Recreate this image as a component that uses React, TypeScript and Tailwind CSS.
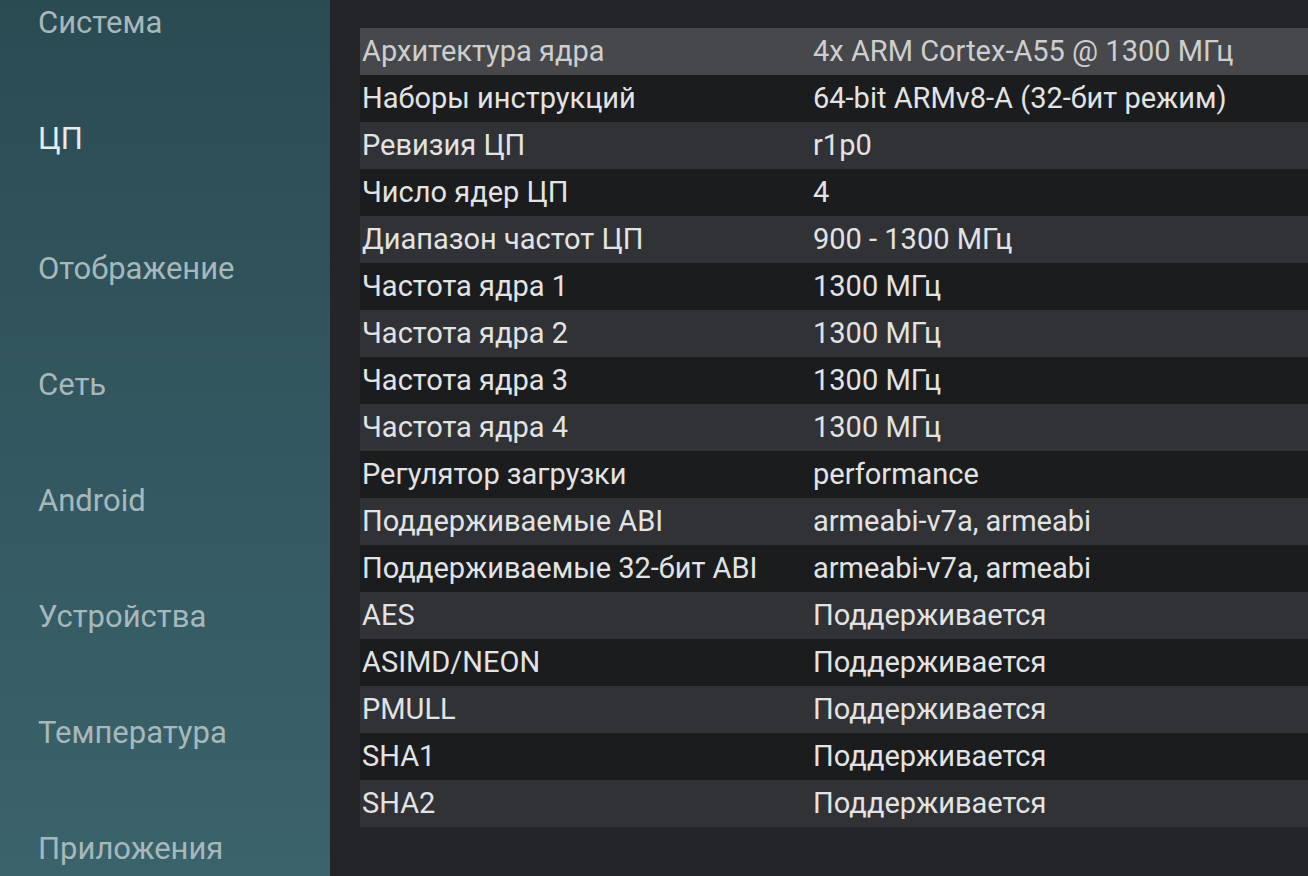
import React from 'react';

const menu = [
  { name: 'Система' },
  { name: 'ЦП', active: true },
  { name: 'Отображение' },
  { name: 'Сеть' },
  { name: 'Android' },
  { name: 'Устройства' },
  { name: 'Температура' },
  { name: 'Приложения' },
];

const rows: [string, string][] = [
  ['Архитектура ядра', '4x ARM Cortex-A55 @ 1300 МГц'],
  ['Наборы инструкций', '64-bit ARMv8-A (32-бит режим)'],
  ['Ревизия ЦП', 'r1p0'],
  ['Число ядер ЦП', '4'],
  ['Диапазон частот ЦП', '900 - 1300 МГц'],
  ['Частота ядра 1', '1300 МГц'],
  ['Частота ядра 2', '1300 МГц'],
  ['Частота ядра 3', '1300 МГц'],
  ['Частота ядра 4', '1300 МГц'],
  ['Регулятор загрузки', 'performance'],
  ['Поддерживаемые ABI', 'armeabi-v7a, armeabi'],
  ['Поддерживаемые 32-бит ABI', 'armeabi-v7a, armeabi'],
  ['AES', 'Поддерживается'],
  ['ASIMD/NEON', 'Поддерживается'],
  ['PMULL', 'Поддерживается'],
  ['SHA1', 'Поддерживается'],
  ['SHA2', 'Поддерживается'],
];

export default function App() {
  return (
    <div
      className="flex w-[1308px] h-[876px] overflow-hidden bg-[#242528]"
      style={{ fontFamily: 'Roboto, "Noto Sans", sans-serif' }}
    >
      {/* Category list */}
      <div className="w-[330px] shrink-0 h-full bg-gradient-to-b from-[#2b4b53] via-[#335760] to-[#3b636c] pl-[38px] overflow-hidden">
        <div className="flex flex-col mt-[-36px]">
          {menu.map((m) => (
            <div
              key={m.name}
              className={`h-[116px] flex items-center text-[31px] leading-none ${
                m.active ? 'text-[#e6eced] mb-[14px]' : 'text-[#a7b8bc]'
              }`}
            >
              {m.name}
            </div>
          ))}
        </div>
      </div>

      {/* CPU details */}
      <div className="flex-1 h-full pt-[28px] pl-[30px]">
        {rows.map(([label, value], i) => (
          <div
            key={label}
            className={`h-[47px] flex items-center text-[29px] leading-none pl-[2px] ${
              i === 0 ? 'bg-[#47484b] text-[#cdcecf]' : i % 2 === 0 ? 'bg-[#313235] text-[#e2e3e4]' : 'bg-[#1b1c1e] text-[#e2e3e4]'
            }`}
          >
            <span className="w-[451px] shrink-0 whitespace-nowrap">{label}</span>
            <span className="whitespace-nowrap">{value}</span>
          </div>
        ))}
      </div>
    </div>
  );
}
